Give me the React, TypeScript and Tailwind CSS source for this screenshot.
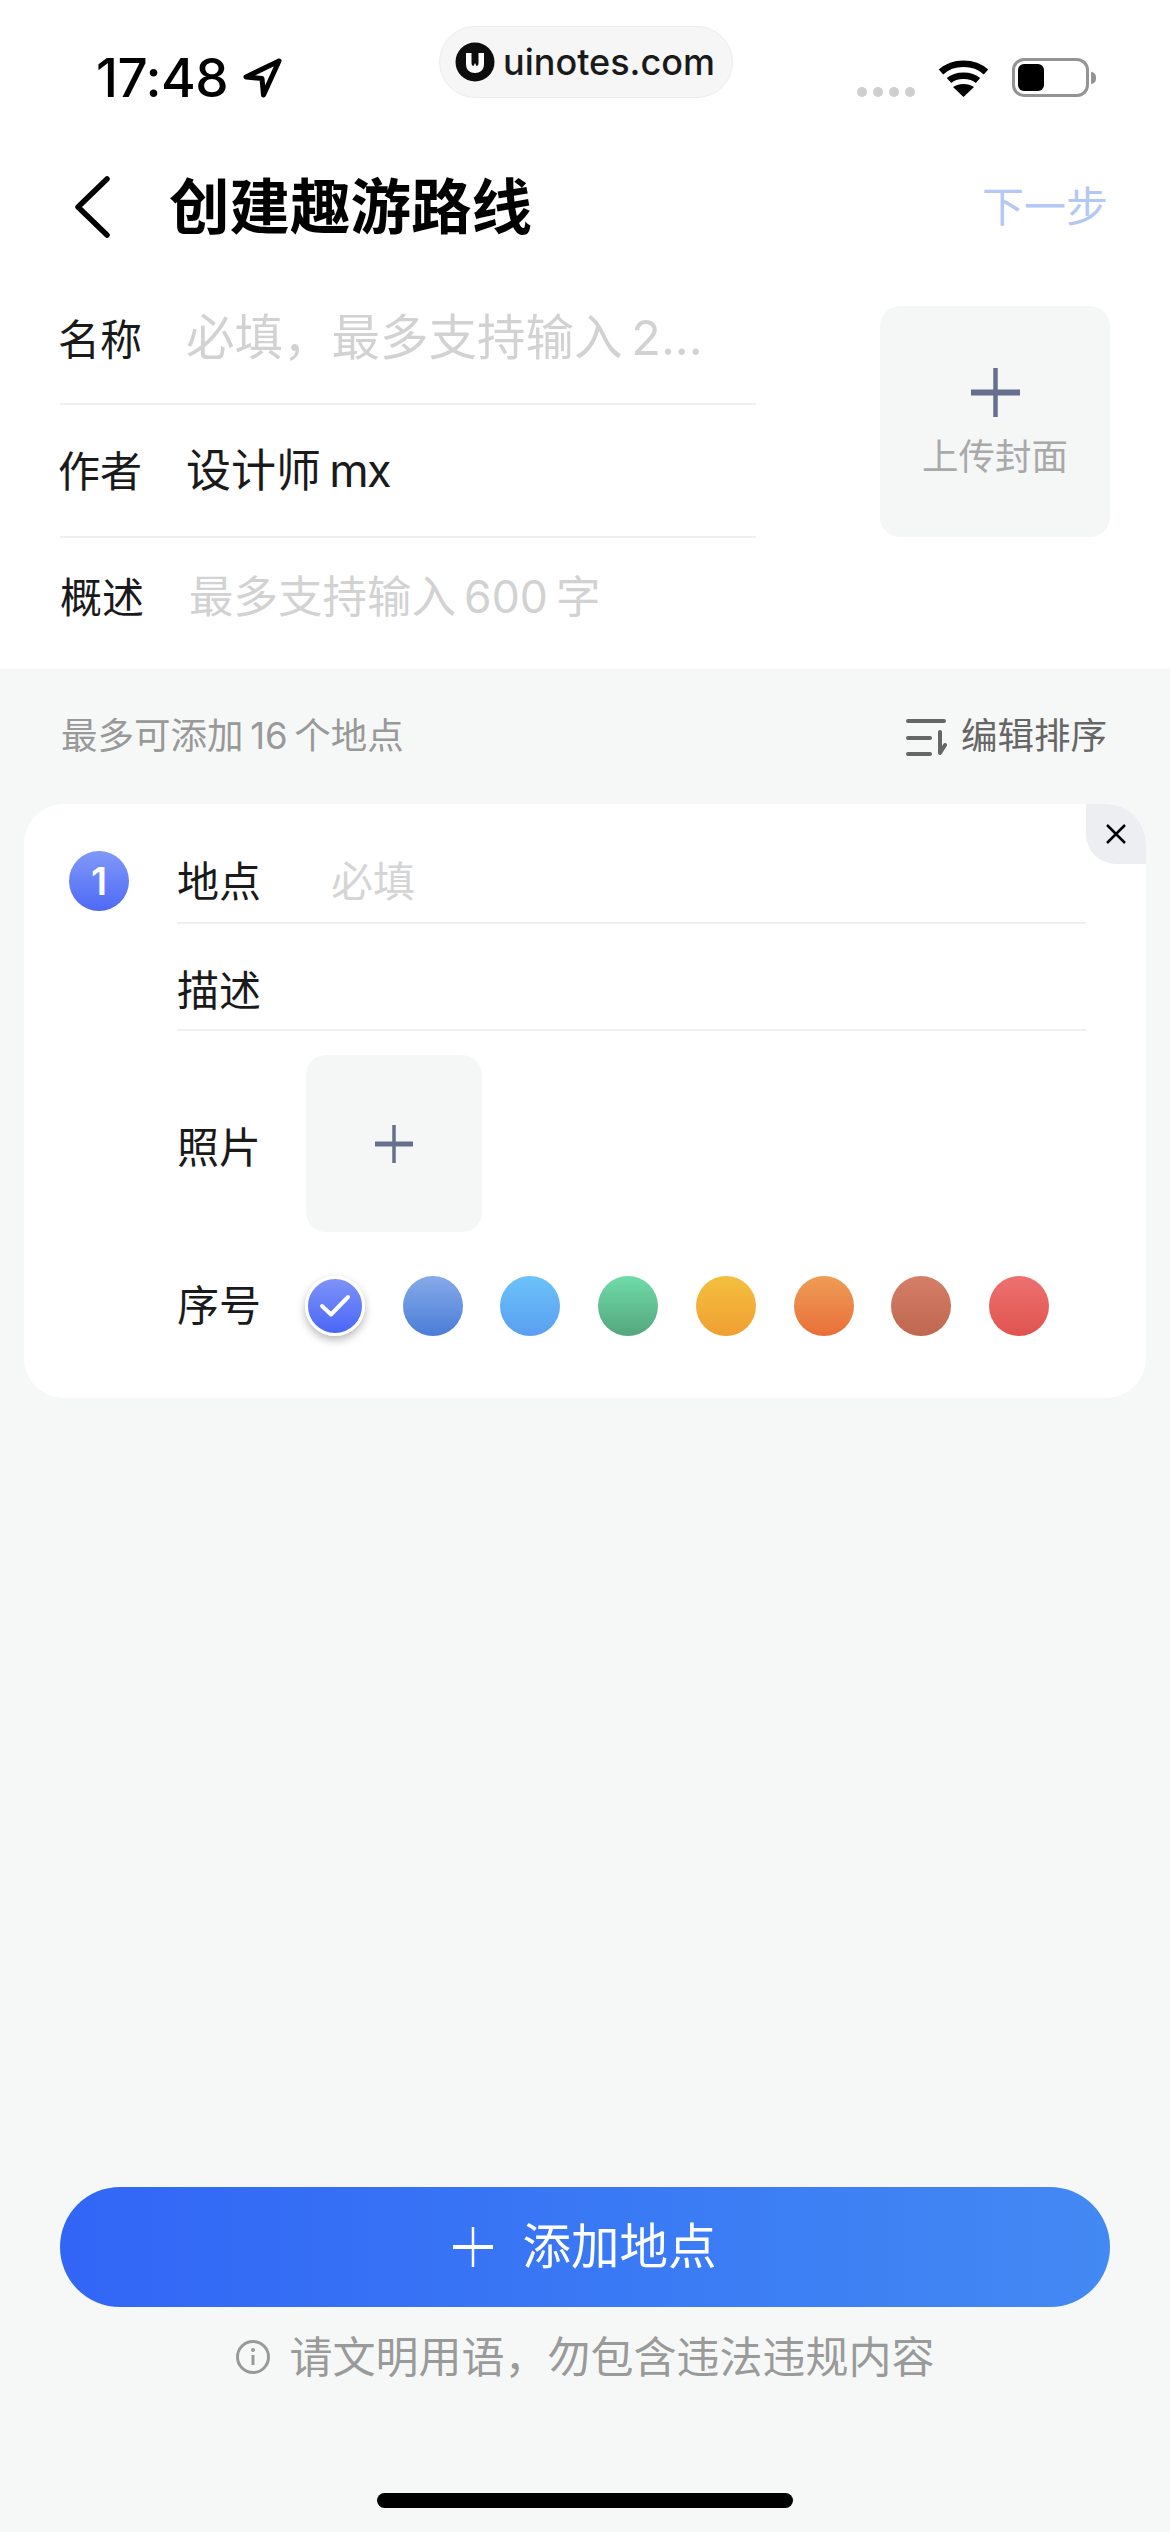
const cjk = "font-['Inter','Noto_Sans_CJK_SC',sans-serif]";

const swatches = [
  "from-[#87aaea] to-[#4a7dd6]",
  "from-[#6cc2f9] to-[#5a9ef0]",
  "from-[#6fdca9] to-[#55a67d]",
  "from-[#f3c03e] to-[#f09f32]",
  "from-[#ef9c56] to-[#e86f39]",
  "from-[#d57e68] to-[#bf674f]",
  "from-[#ed7270] to-[#e0534f]",
];

function Plus({ size, stroke, color }: { size: number; stroke: number; color: string }) {
  const mid = size / 2;
  return (
    <svg width={size} height={size} viewBox={`0 0 ${size} ${size}`} fill="none">
      <path d={`M${mid} 0V${size}`} stroke={color} strokeWidth={stroke - 1.5} strokeLinecap="round" />
      <path d={`M0 ${mid}H${size}`} stroke={color} strokeWidth={stroke} strokeLinecap="round" />
    </svg>
  );
}

function StatusBar() {
  return (
    <div className="flex h-[150px] pl-[96px]">
      <div className="flex h-fit w-[343px] items-center pt-[53px]">
        <span className="font-['Inter',sans-serif] text-[53px] leading-[50px] font-medium tracking-[-0.5px] text-black">
          17:48
        </span>
        <svg className="ml-[15px]" width="40" height="40" viewBox="0 0 40 40" fill="none">
          <path d="M36 3L3 19L19 20.5L20.5 37Z" stroke="#000" strokeWidth="5" strokeLinejoin="round" />
        </svg>
      </div>
      <div className="mt-[26px] flex h-[72px] w-[294px] items-center rounded-[36px] border border-[#ececec] bg-[#f6f6f6] pl-[15px]">
        <svg width="40" height="40" viewBox="0 0 40 40">
          <circle cx="20" cy="20" r="19.5" fill="#0d0d0d" />
          <path d="M11 11H16.5V21C16.5 23 17.5 24 18.5 24L20 21L21.5 24C22.5 24 23.5 23 23.5 21V11H29V22C29 28 25 31 20 31C15 31 11 28 11 22Z" fill="#fff" />
        </svg>
        <span className="ml-[8px] font-['Inter',sans-serif] text-[36px] leading-none font-medium text-[#1a1a1a]">
          uinotes.com
        </span>
      </div>
      <div className="ml-[124px] flex h-fit items-center pt-[58px]">
        <div className="mt-[28px] flex gap-[6px]">
          <span className="h-[10px] w-[10px] rounded-full bg-[#cfcfcf]" />
          <span className="h-[10px] w-[10px] rounded-full bg-[#cfcfcf]" />
          <span className="h-[10px] w-[10px] rounded-full bg-[#cfcfcf]" />
          <span className="h-[10px] w-[10px] rounded-full bg-[#cfcfcf]" />
        </div>
        <svg className="ml-[23px]" width="51" height="38" viewBox="0 0 51 38" fill="none">
          <path d="M3 13C15 2 36 2 48 13" stroke="#000" strokeWidth="6.5" />
          <path d="M11 21.5C18 15 33 15 40 21.5" stroke="#000" strokeWidth="6.5" />
          <path d="M25.5 38L15 28C21 24 30 24 36 28Z" fill="#000" />
        </svg>
        <div className="ml-[23px] flex h-[39px] w-[77px] items-center rounded-[12px] border-[3px] border-[#949494] p-[3px]">
          <div className="h-[27px] w-[26px] rounded-[6px] bg-black" />
        </div>
        <div className="ml-[2px] h-[12px] w-[5px] rounded-r-full bg-[#949494]" />
      </div>
    </div>
  );
}

function NavBar() {
  return (
    <div className="flex h-[122px] items-center justify-between pr-[62px] pb-[8px] pl-[74px]">
      <div className="flex items-center">
        <svg width="36" height="62" viewBox="0 0 36 62" fill="none">
          <path d="M33 3L4 31L33 59" stroke="#000" strokeWidth="5.5" strokeLinecap="round" strokeLinejoin="round" />
        </svg>
        <h1 className="ml-[59px] text-[60.5px] leading-none font-bold text-black">创建趣游路线</h1>
      </div>
      <span className="text-[42px] leading-none text-[#b3c8f4]">下一步</span>
    </div>
  );
}

function BasicForm() {
  return (
    <div className="flex pl-[60px]">
      <div className="w-[696px]">
        <div className="flex h-[133px] items-center border-b-2 border-[#f0f0f0]">
          <span className="-ml-[2px] w-[128px] pt-[4px] text-[42px] text-[#1a1a1a]">名称</span>
          <span className="pt-[2px] text-[48.5px] text-[#d2d2d2]">{"必填，最多支持输入\u20092..."}</span>
        </div>
        <div className="flex h-[133px] items-center border-b-2 border-[#f0f0f0]">
          <span className="-ml-[2px] w-[128px] pt-[2px] text-[42px] text-[#1a1a1a]">作者</span>
          <span className="text-[45px] text-[#1a1a1a]">{"设计师\u2009"}<span className="tracking-[-1.5px]">mx</span></span>
        </div>
        <div className="flex h-[119px] items-center">
          <span className="w-[129px] text-[42px] text-[#1a1a1a]">概述</span>
          <span className="text-[44.5px] text-[#d2d2d2]">{"最多支持输入\u2009600\u2009字"}</span>
        </div>
      </div>
      <div className="mt-[34px] ml-[124px] flex h-[231px] w-[230px] flex-col items-center rounded-[20px] bg-[#f5f7f7] pt-[62px]">
        <Plus size={49} stroke={6} color="#676f8d" />
        <span className="mt-[20px] text-[36.5px] leading-[40px] text-[#a9a9a9]">上传封面</span>
      </div>
    </div>
  );
}

function SortIcon() {
  return (
    <svg width="42" height="38" viewBox="0 0 42 38" fill="none">
      <path d="M3 3H39" stroke="#666" strokeWidth="4" strokeLinecap="round" />
      <path d="M3 20H25" stroke="#666" strokeWidth="4" strokeLinecap="round" />
      <path d="M3 36H25" stroke="#666" strokeWidth="4" strokeLinecap="round" />
      <path d="M35 14V35L40 27" stroke="#666" strokeWidth="4" strokeLinecap="round" strokeLinejoin="round" />
    </svg>
  );
}

function PlaceCard() {
  return (
    <div className="relative mx-[24px] flex h-[594px] overflow-hidden rounded-[40px] bg-white">
      <div className="mt-[47px] ml-[45px] flex h-[60px] w-[60px] items-center justify-center rounded-full bg-gradient-to-b from-[#8198f9] to-[#4e69f5] font-['Inter',sans-serif] text-[38px] font-semibold text-white">
        1
      </div>
      <div className="ml-[48px] w-[909px]">
        <div className="flex h-[120px] items-center border-b-2 border-[#f0f0f0] pt-[37px]">
          <span className="w-[154px] text-[42px] text-[#1a1a1a]">地点</span>
          <span className="text-[42px] text-[#d5d5d5]">必填</span>
        </div>
        <div className="flex h-[107px] items-center border-b-2 border-[#f0f0f0] pt-[27px]">
          <span className="text-[42px] text-[#1a1a1a]">描述</span>
        </div>
        <div className="mt-[24px] flex items-center">
          <span className="w-[129px] pt-[8px] text-[42px] text-[#1a1a1a]">照片</span>
          <div className="flex h-[177px] w-[176px] items-center justify-center rounded-[20px] bg-[#f5f7f7]">
            <Plus size={38} stroke={5} color="#676f8d" />
          </div>
        </div>
        <div className="mt-[42px] flex items-center">
          <span className="w-[128px] text-[42px] text-[#1a1a1a]">序号</span>
          <div className="flex w-[744px] items-center justify-between">
            <div className="flex h-[60px] w-[60px] items-center justify-center rounded-full border-[3px] border-white bg-gradient-to-b from-[#7f92f9] to-[#4a66f6] shadow-[0_4px_8px_rgba(0,0,0,0.28)]">
              <svg width="32" height="24" viewBox="0 0 32 24" fill="none">
                <path d="M3 12L12 20.5L29 3" stroke="#fff" strokeWidth="4" strokeLinecap="round" strokeLinejoin="round" />
              </svg>
            </div>
            {swatches.map((s, i) => (
              <div key={i} className={`h-[60px] w-[60px] rounded-full bg-gradient-to-b ${s}`} />
            ))}
          </div>
        </div>
      </div>
      <div className="absolute top-0 right-0 flex h-[60px] w-[60px] items-center justify-center rounded-bl-[30px] bg-[#eceef2]">
        <svg width="20" height="20" viewBox="0 0 20 20" fill="none">
          <path d="M1 1L19 19M19 1L1 19" stroke="#000" strokeWidth="2.5" />
        </svg>
      </div>
    </div>
  );
}

export default function App() {
  return (
    <div className={`flex h-[2532px] w-[1170px] flex-col overflow-hidden bg-[#f6f8f7] ${cjk}`}>
      <div className="h-[669px] bg-white">
        <StatusBar />
        <NavBar />
        <BasicForm />
      </div>

      <div className="flex h-[135px] items-center justify-between pr-[63px] pl-[61px]">
        <span className="text-[36.5px] text-[#999]">{"最多可添加\u200916\u2009个地点"}</span>
        <div className="flex items-center gap-[14px]">
          <SortIcon />
          <span className="text-[36.5px] text-[#666]">编辑排序</span>
        </div>
      </div>

      <PlaceCard />

      <div className="mt-auto flex h-[345px] flex-col">
        <div className="mx-[60px] flex h-[120px] items-center justify-center rounded-full bg-gradient-to-r from-[#3265f6] to-[#4389f3]">
          <Plus size={40} stroke={4} color="#fff" />
          <span className="ml-[29px] text-[48.5px] leading-none text-white">添加地点</span>
        </div>
        <div className="mt-[28px] flex h-[44px] items-center justify-center">
          <svg width="34" height="34" viewBox="0 0 34 34" fill="none">
            <circle cx="17" cy="17" r="15.5" stroke="#999" strokeWidth="3" />
            <path d="M17 15V25" stroke="#999" strokeWidth="3" />
            <circle cx="17" cy="10" r="2" fill="#999" />
          </svg>
          <span className="ml-[20px] text-[43px] leading-none text-[#9a9a9a]">请文明用语，勿包含违法违规内容</span>
        </div>
        <div className="mx-auto mt-[114px] h-[15px] w-[416px] rounded-full bg-black" />
      </div>
    </div>
  );
}
